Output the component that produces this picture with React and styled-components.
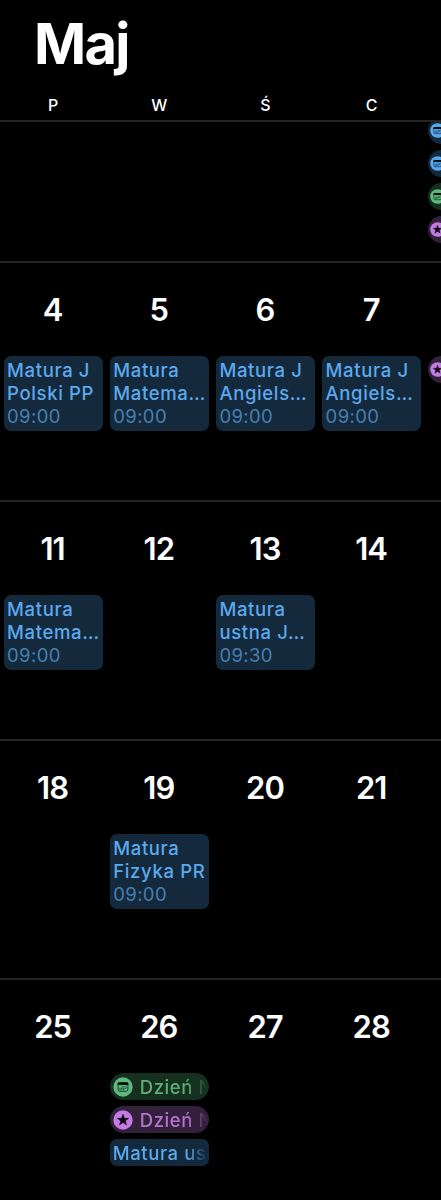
import styled, { createGlobalStyle } from "styled-components";

const GlobalStyle = createGlobalStyle`
  * {
    box-sizing: border-box;
  }
  body {
    margin: 0;
    background: #000;
    font-family: Inter, "Liberation Sans", sans-serif;
  }
`;

const colors = {
  blue: { main: "#58a8ee", text: "#5ba9ee", back: "#14293b", ink: "#1b3c5c" },
  green: { main: "#5fb87f", text: "#5fae79", back: "#15301f", ink: "#17452a" },
  purple: { main: "#c27be3", text: "#b573d1", back: "#33203b", ink: "#0d0610" },
};

const Screen = styled.div`
  width: 441px;
  height: 1200px;
  overflow: hidden;
  background: #000;
  color: #fff;
`;

const Header = styled.header`
  height: 120px;
`;

const Month = styled.h1`
  margin: 0;
  padding: 10px 0 0 34px;
  height: 91px;
  font-size: 56px;
  line-height: 69px;
  font-weight: 680;
  letter-spacing: -1.7px;
`;

const Columns = styled.div`
  display: grid;
  grid-template-columns: repeat(5, 106.2px);
`;

const Weekday = styled.div`
  text-align: center;
  font-size: 16px;
  line-height: 29px;
  font-weight: 500;
`;

const Week = styled.section`
  height: ${(props) => (props.$short ? "141px" : "239px")};
  border-top: 2px solid #242426;
  overflow: hidden;
`;

const Day = styled.div`
  display: flex;
  flex-direction: column;
  padding: 0 3.5px;
  min-width: 0;
`;

const DayNumber = styled.div`
  height: 93px;
  padding: 28px 1px 0 0;
  text-align: center;
  font-size: 31px;
  line-height: 38px;
  font-weight: 560;
  letter-spacing: -1px;
`;

const Events = styled.div`
  display: flex;
  flex-direction: column;
  gap: 6px;
  margin-top: ${(props) => (props.$scrolled ? "-5px" : "0")};
`;

const Card = styled.div`
  height: 75px;
  padding: 3px 0 0 3.5px;
  border-radius: 7px;
  background: ${colors.blue.back};
  color: ${colors.blue.text};
  overflow: hidden;
  white-space: nowrap;
`;

const CardLine = styled.div`
  font-size: 18.5px;
  line-height: 23px;
  font-weight: 550;
  letter-spacing: 0.65px;
`;

const CardTime = styled.div`
  font-size: 18.5px;
  line-height: 23px;
  font-weight: 400;
  letter-spacing: 0.4px;
  color: #4580b2;
`;

const Pill = styled.div`
  display: flex;
  align-items: center;
  gap: 7px;
  height: 27px;
  padding-left: ${(props) => (props.$compact ? "2px" : "3px")};
  border-radius: ${(props) => (props.$square ? "7px" : "14px")};
  background: ${(props) => colors[props.$tone].back};
  overflow: hidden;
`;

const PillText = styled.span`
  flex: 1;
  min-width: 0;
  overflow: hidden;
  white-space: nowrap;
  font-size: 18.5px;
  line-height: 28px;
  font-weight: 550;
  letter-spacing: 0.6px;
  color: ${(props) => colors[props.$tone].text};
  mask-image: linear-gradient(to right, #000 calc(100% - 23px), transparent calc(100% - 1px));
`;

const Icon = styled.svg`
  flex: none;
  width: ${(props) => (props.$compact ? "15px" : "20px")};
  height: ${(props) => (props.$compact ? "15px" : "20px")};
`;

const CalendarIcon = ({ tone, compact }) => (
  <Icon viewBox="0 0 20 20" $compact={compact}>
    <circle cx="10" cy="10" r="9.7" fill={colors[tone].main} />
    <rect x="5.1" y="5.9" width="9.8" height="8.4" rx="1.5" fill="none" stroke={colors[tone].ink} />
    <path d="M4.6 7.9V6.8c0-.9.6-1.5 1.5-1.5h7.8c.9 0 1.5.6 1.5 1.5v1.1z" fill="#07110c" />
    <path
      d="M8.6 9.8H14M6.4 11.3H14M6.4 12.8H12"
      stroke={colors[tone].ink}
      strokeWidth="1"
      strokeDasharray="1.3 .6"
    />
  </Icon>
);

const StarIcon = ({ tone, compact }) => (
  <Icon viewBox="0 0 20 20" $compact={compact}>
    <circle cx="10" cy="10" r="9.7" fill={colors[tone].main} />
    <path
      d="M10 4.1l1.45 4.1 4.35.1-3.45 2.65 1.25 4.15L10 12.6l-3.6 2.5 1.25-4.15L4.2 8.3l4.35-.1z"
      fill={colors[tone].ink}
      stroke={colors[tone].ink}
      strokeWidth="0.4"
      strokeLinejoin="round"
    />
  </Icon>
);

const icons = { calendar: CalendarIcon, star: StarIcon };

const matura = (first, second, time = "09:00") => ({ lines: [first, second], time });
const allDay = (icon, tone, text = "") => ({ icon, tone, text });

const weekdays = ["P", "W", "Ś", "C"];

const weeks = [
  {
    id: "w1",
    scrolled: true,
    days: [
      {},
      {},
      {},
      {},
      {
        events: [
          allDay("calendar", "blue"),
          allDay("calendar", "blue"),
          allDay("calendar", "green"),
          allDay("star", "purple"),
        ],
      },
    ],
  },
  {
    id: "w2",
    days: [
      { number: 4, events: [matura("Matura J", "Polski PP")] },
      { number: 5, events: [matura("Matura", "Matema…")] },
      { number: 6, events: [matura("Matura J", "Angiels…")] },
      { number: 7, events: [matura("Matura J", "Angiels…")] },
      { events: [allDay("star", "purple")] },
    ],
  },
  {
    id: "w3",
    days: [
      { number: 11, events: [matura("Matura", "Matema…")] },
      { number: 12 },
      { number: 13, events: [matura("Matura", "ustna J…", "09:30")] },
      { number: 14 },
    ],
  },
  {
    id: "w4",
    days: [
      { number: 18 },
      { number: 19, events: [matura("Matura", "Fizyka PR")] },
      { number: 20 },
      { number: 21 },
    ],
  },
  {
    id: "w5",
    days: [
      { number: 25 },
      {
        number: 26,
        events: [
          allDay("calendar", "green", "Dzień N"),
          allDay("star", "purple", "Dzień N"),
          allDay(null, "blue", "Matura us"),
        ],
      },
      { number: 27 },
      { number: 28 },
    ],
  },
];

const Event = ({ event }) => {
  if (event.lines) {
    return (
      <Card>
        {event.lines.map((line) => (
          <CardLine key={line}>{line}</CardLine>
        ))}
        <CardTime>{event.time}</CardTime>
      </Card>
    );
  }
  const EventIcon = icons[event.icon];
  const compact = !event.text;
  return (
    <Pill $tone={event.tone} $square={!EventIcon} $compact={compact}>
      {EventIcon && <EventIcon tone={event.tone} compact={compact} />}
      {event.text && <PillText $tone={event.tone}>{event.text}</PillText>}
    </Pill>
  );
};

export default function App() {
  return (
    <Screen>
      <GlobalStyle />
      <Header>
        <Month>Maj</Month>
        <Columns>
          {weekdays.map((name) => (
            <Weekday key={name}>{name}</Weekday>
          ))}
        </Columns>
      </Header>
      {weeks.map((week) => (
        <Week key={week.id} $short={week.scrolled}>
          <Columns>
            {week.days.map((day, i) => (
              <Day key={i}>
                {!week.scrolled && <DayNumber>{day.number}</DayNumber>}
                <Events $scrolled={week.scrolled}>
                  {(day.events || []).map((event, n) => (
                    <Event key={n} event={event} />
                  ))}
                </Events>
              </Day>
            ))}
          </Columns>
        </Week>
      ))}
    </Screen>
  );
}
